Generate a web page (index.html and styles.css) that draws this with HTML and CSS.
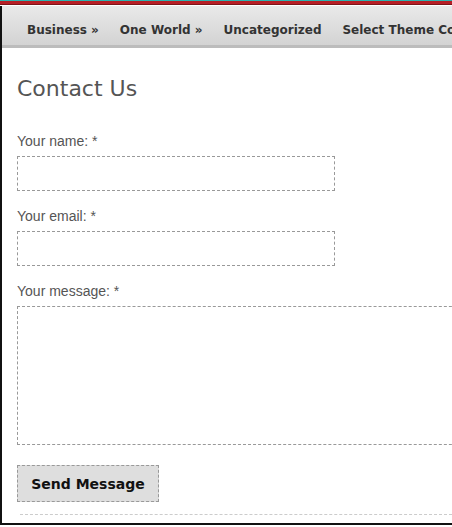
FILE: index.html
```html
<!DOCTYPE html>
<html lang="en">
<head>
  <meta charset="UTF-8">
  <meta name="viewport" content="width=device-width, initial-scale=1.0">
  <title>Contact Us</title>
  <link rel="stylesheet" href="styles.css">
</head>
<body>
  <div class="stripe"></div>
  <div class="page">
    <!-- main menu -->
    <ul class="nav">
      <li>Business &raquo;</li>
      <li>One World &raquo;</li>
      <li>Uncategorized</li>
      <li>Select Theme Color</li>
    </ul>

    <div class="content">
      <h1>Contact Us</h1>
      <form class="contact">
        <label for="c-name">Your name: *</label>
        <input type="text" id="c-name" class="field">

        <label for="c-email">Your email: *</label>
        <input type="text" id="c-email" class="field">

        <label for="c-msg">Your message: *</label>
        <textarea id="c-msg" class="field message"></textarea>

        <button type="button" class="send">Send Message</button>
      </form>
      <div class="rule"></div>
    </div>
  </div>
</body>
</html>
```

FILE: styles.css
```css
body {
  margin: 0;
  padding: 0;
  background: #fff;
  overflow: hidden;
}

.stripe {
  height: 3px;
  background: #b61f25;
  border-top: 1px solid #2cb3b0;
  border-bottom: 1px solid #7e1418;
  margin-bottom: 1px;
}

.page {
  border-left: 2px solid #111;
  border-bottom: 2px solid #111;
  height: 519px;
  box-sizing: border-box;
  overflow: hidden;
}

.nav {
  list-style: none;
  margin: 0;
  padding: 9px 0 0 25px;
  height: 42px;
  box-sizing: border-box;
  display: flex;
  align-items: center;
  gap: 21px;
  white-space: nowrap;
  background: linear-gradient(#e9e9e9, #d3d3d3);
  border-bottom: 3px solid #bcbcbc;
  font-family: "DejaVu Sans", sans-serif;
  font-weight: bold;
  font-size: 12px;
  color: #333;
}

.nav li {
  flex-shrink: 0;
}

.content {
  padding: 0 0 0 15px;
}

h1 {
  margin: 28px 0 32px;
  font-family: "DejaVu Sans", sans-serif;
  font-weight: normal;
  font-size: 22px;
  color: #555;
}

.contact label {
  display: block;
  font-family: "Liberation Sans", Arial, sans-serif;
  font-size: 14px;
  color: #555;
  margin-bottom: 7px;
}

.field {
  display: block;
  width: 318px;
  height: 35px;
  box-sizing: border-box;
  border: 1px dashed #999;
  background: #fff;
  margin: 0 0 17px;
  padding: 4px;
}

.message {
  width: 460px;
  height: 139px;
  resize: none;
  margin-bottom: 20px;
}

.send {
  width: 142px;
  height: 37px;
  background: #dedede;
  border: 1px dashed #999;
  font-family: "DejaVu Sans", sans-serif;
  font-weight: bold;
  font-size: 14px;
  color: #111;
  padding: 0;
}

.rule {
  margin: 12px 0 0 3px;
  border-top: 1px dashed #ccc;
}
```
